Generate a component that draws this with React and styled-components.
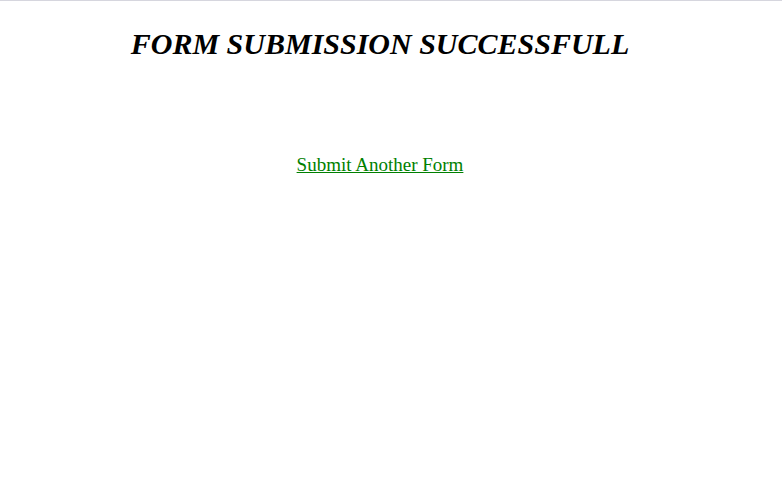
import React from "react";
import styled, { createGlobalStyle } from "styled-components";

const GlobalStyle = createGlobalStyle`
  html, body {
    margin: 0;
    padding: 0;
    background: #ffffff;
    font-family: "Liberation Serif", "Times New Roman", serif;
  }
`;

const Page = styled.div`
  border-top: 1px solid #d6d6de;
  min-height: 491px;
`;

const Content = styled.div`
  width: 760px;
  display: flex;
  flex-direction: column;
  align-items: center;
`;

const Title = styled.h1`
  margin: 26px 0 0;
  font-size: 30px;
  font-weight: bold;
  font-style: italic;
  color: #000000;
`;

const Another = styled.a`
  margin-top: 93px;
  font-size: 19px;
  color: #008000;
  text-decoration: underline;
`;

export default function App() {
  return (
    <>
      <GlobalStyle />
      <Page>
        <Content>
          <Title>FORM SUBMISSION SUCCESSFULL</Title>
          <Another href="#">Submit Another Form</Another>
        </Content>
      </Page>
    </>
  );
}
